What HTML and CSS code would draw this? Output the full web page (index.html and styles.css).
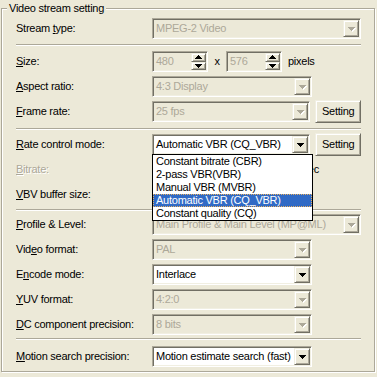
FILE: index.html
```html
<!DOCTYPE html>
<html lang="en">
<head>
    <meta charset="UTF-8">
    <title>Video stream setting</title>
    <link rel="stylesheet" href="styles.css">
</head>
<body>
    <div class="group">
        <span class="legend">Video stream setting</span>

        <div class="row">
            <div class="label">Stream <u>t</u>ype:</div>
            <div class="combo off wide">
                <span class="val">MPEG-2 Video</span>
                <span class="drop"><svg class="arr" width="7" height="4"><path d="M0 0h7v1H0zM1 1h5v1H1zM2 2h3v1H2zM3 3h1v1H3z"/></svg></span>
            </div>
        </div>

        <div class="sep first"></div>

        <div class="row">
            <div class="label"><u>S</u>ize:</div>
            <div class="edit">
                <span class="val">480</span>
                <span class="spin">
                    <span class="btn"><svg width="7" height="4"><path d="M3 0h1v1H3zM2 1h3v1H2zM1 2h5v1H1zM0 3h7v1H0z"/></svg></span>
                    <span class="btn"><svg width="7" height="4"><path d="M0 0h7v1H0zM1 1h5v1H1zM2 2h3v1H2zM3 3h1v1H3z"/></svg></span>
                </span>
            </div>
            <span class="times">x</span>
            <div class="edit">
                <span class="val">576</span>
                <span class="spin">
                    <span class="btn"><svg width="7" height="4"><path d="M3 0h1v1H3zM2 1h3v1H2zM1 2h5v1H1zM0 3h7v1H0z"/></svg></span>
                    <span class="btn"><svg width="7" height="4"><path d="M0 0h7v1H0zM1 1h5v1H1zM2 2h3v1H2zM3 3h1v1H3z"/></svg></span>
                </span>
            </div>
            <span class="unit">pixels</span>
        </div>

        <div class="row">
            <div class="label"><u>A</u>spect ratio:</div>
            <div class="combo off">
                <span class="val">4:3 Display</span>
                <span class="drop"><svg class="arr" width="7" height="4"><path d="M0 0h7v1H0zM1 1h5v1H1zM2 2h3v1H2zM3 3h1v1H3z"/></svg></span>
            </div>
        </div>

        <div class="row">
            <div class="label"><u>F</u>rame rate:</div>
            <div class="combo off">
                <span class="val">25 fps</span>
                <span class="drop"><svg class="arr" width="7" height="4"><path d="M0 0h7v1H0zM1 1h5v1H1zM2 2h3v1H2zM3 3h1v1H3z"/></svg></span>
            </div>
            <div class="button">Setting</div>
        </div>

        <div class="sep mid"></div>

        <div class="row rate">
            <div class="label"><u>R</u>ate control mode:</div>
            <div class="combo">
                <span class="val">Automatic VBR (CQ_VBR)</span>
                <span class="drop"><svg class="arr" width="7" height="4"><path d="M0 0h7v1H0zM1 1h5v1H1zM2 2h3v1H2zM3 3h1v1H3z"/></svg></span>
            </div>
            <div class="button">Setting</div>

            <!-- open dropdown list of the rate control combo -->
            <div class="list">
                <div class="item">Constant bitrate (CBR)</div>
                <div class="item">2-pass VBR(VBR)</div>
                <div class="item">Manual VBR (MVBR)</div>
                <div class="item sel">Automatic VBR (CQ_VBR)</div>
                <div class="item">Constant quality (CQ)</div>
            </div>
        </div>

        <div class="row">
            <div class="label dim"><u>B</u>itrate:</div>
            <div class="hidden-unit">Kbit/sec</div>
        </div>

        <div class="row">
            <div class="label"><u>V</u>BV buffer size:</div>
        </div>

        <div class="sep low"></div>

        <div class="row">
            <div class="label"><u>P</u>rofile &amp; Level:</div>
            <div class="combo off wide">
                <span class="val">Main Profile &amp; Main Level (MP@ML)</span>
                <span class="drop"><svg class="arr" width="7" height="4"><path d="M0 0h7v1H0zM1 1h5v1H1zM2 2h3v1H2zM3 3h1v1H3z"/></svg></span>
            </div>
        </div>

        <div class="row">
            <div class="label">Vid<u>e</u>o format:</div>
            <div class="combo off">
                <span class="val">PAL</span>
                <span class="drop"><svg class="arr" width="7" height="4"><path d="M0 0h7v1H0zM1 1h5v1H1zM2 2h3v1H2zM3 3h1v1H3z"/></svg></span>
            </div>
        </div>

        <div class="row">
            <div class="label">E<u>n</u>code mode:</div>
            <div class="combo">
                <span class="val">Interlace</span>
                <span class="drop"><svg class="arr" width="7" height="4"><path d="M0 0h7v1H0zM1 1h5v1H1zM2 2h3v1H2zM3 3h1v1H3z"/></svg></span>
            </div>
        </div>

        <div class="row">
            <div class="label"><u>Y</u>UV format:</div>
            <div class="combo off">
                <span class="val">4:2:0</span>
                <span class="drop"><svg class="arr" width="7" height="4"><path d="M0 0h7v1H0zM1 1h5v1H1zM2 2h3v1H2zM3 3h1v1H3z"/></svg></span>
            </div>
        </div>

        <div class="row">
            <div class="label"><u>D</u>C component precision:</div>
            <div class="combo off">
                <span class="val">8 bits</span>
                <span class="drop"><svg class="arr" width="7" height="4"><path d="M0 0h7v1H0zM1 1h5v1H1zM2 2h3v1H2zM3 3h1v1H3z"/></svg></span>
            </div>
        </div>

        <div class="sep last"></div>

        <div class="row">
            <div class="label"><u>M</u>otion search precision:</div>
            <div class="combo">
                <span class="val">Motion estimate search (fast)</span>
                <span class="drop"><svg class="arr" width="7" height="4"><path d="M0 0h7v1H0zM1 1h5v1H1zM2 2h3v1H2zM3 3h1v1H3z"/></svg></span>
            </div>
        </div>
    </div>
</body>
</html>
```

FILE: styles.css
```css
body {
    margin: 0;
    width: 377px;
    height: 377px;
    overflow: hidden;
    background: #ECE9D8;
    color: #000;
    font-family: "Liberation Sans", Arial, sans-serif;
    font-size: 11px;
    line-height: 13px;
    letter-spacing: -0.25px; /* closer to Tahoma widths */
}

/* etched group box */
.group {
    position: relative;
    box-sizing: border-box;
    width: 374px;
    height: 364px;
    margin: 8px 0 0 1px;
    padding: 7px 13px 0 14px;
    border: 1px solid #ACA899;
    box-shadow: inset 1px 1px 0 #fff, 1px 1px 0 #fff;
}

.legend {
    position: absolute;
    left: 5px;
    top: -8px;
    padding: 0 2px;
    line-height: 14px;
    background: #ECE9D8;
}

.row {
    display: flex;
    align-items: center;
    height: 25px;
}

.label {
    width: 136px;
    flex: none;
}

.label.dim {
    color: #ACA899;
    text-shadow: 1px 1px 0 #fff;
}

.sep {
    height: 0;
    border-top: 1px solid #ACA899;
    border-bottom: 1px solid #fff;
}

.sep.first { margin: 3px 0 3px; }
.sep.mid { margin: 4px 0 2px; }
.sep.low { margin: 2px 0 1px; }
.sep.last { margin: 1px 0 4px; }

/* sunken field */
.combo,
.edit {
    box-sizing: border-box;
    height: 21px;
    padding: 1px;
    display: flex;
    align-items: stretch;
    background: #fff;
    border: 1px solid;
    border-color: #ACA899 #fff #fff #ACA899;
    box-shadow: inset 1px 1px 0 #716F64, inset -1px -1px 0 #F1EFE2;
}

.combo {
    width: 160px;
}

.combo.wide {
    width: 209px;
}

.val {
    flex: 1;
    padding-left: 2px;
    line-height: 17px;
    white-space: nowrap;
    overflow: hidden;
}

.off,
.edit {
    background: #ECE9D8;
    color: #ACA899;
}

/* raised 3d parts */
.drop,
.btn,
.button {
    box-sizing: border-box;
    background: #ECE9D8;
    border: 1px solid;
    border-color: #F1EFE2 #716F64 #716F64 #F1EFE2;
    box-shadow: inset 1px 1px 0 #fff, inset -1px -1px 0 #ACA899;
    display: flex;
    align-items: center;
    justify-content: center;
}

.drop {
    width: 16px;
    flex: none;
}

.drop svg {
    fill: #000;
}

.off .drop svg {
    fill: #ACA899;
    filter: drop-shadow(1px 1px 0 #fff);
}

.edit {
    width: 56px;
}

.spin {
    width: 15px;
    display: flex;
    flex-direction: column;
}

.btn {
    flex: 1;
}

.btn svg {
    fill: #000;
}

.times {
    width: 18px;
    text-align: center;
}

.unit {
    margin-left: 6px;
}

.button {
    width: 46px;
    height: 23px;
    margin-left: 5px;
    color: #000;
}

.rate {
    position: relative;
}

/* open list of the rate combo */
.list {
    position: absolute;
    left: 136px;
    top: 22px;
    width: 161px;
    box-sizing: border-box;
    background: #fff;
    border: 1px solid #000;
    z-index: 2;
}

.item {
    height: 13px;
    line-height: 13px;
    padding-left: 3px;
    white-space: nowrap;
}

.item.sel {
    background: #316AC5;
    color: #fff;
    outline: 1px dotted #E8B060;
    outline-offset: -1px;
}

.hidden-unit {
    width: 167px;
    text-align: right;
}
```
